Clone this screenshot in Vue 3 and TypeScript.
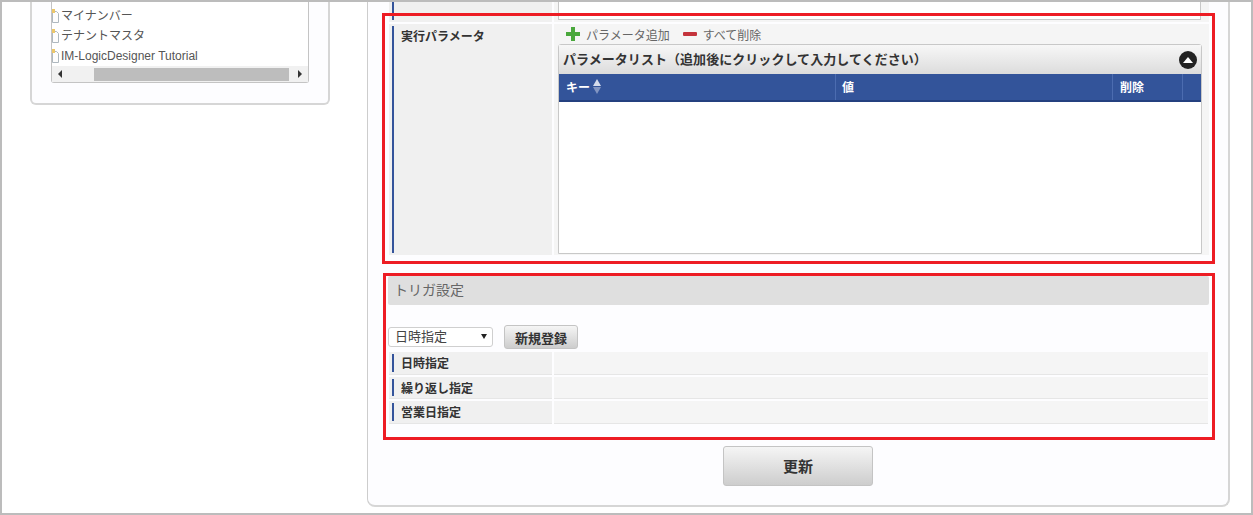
<script setup lang="ts">
const treeItems: string[] = ['マイナンバー', 'テナントマスタ', 'IM-LogicDesigner Tutorial']
const triggerRows: string[] = ['日時指定', '繰り返し指定', '営業日指定']
</script>

<template>
  <div class="frame">
    <aside class="side">
      <div class="side-panel">
        <div class="tree">
          <div class="tree-list">
            <div v-for="item in treeItems" :key="item" class="tree-item">
              <svg class="file" width="7" height="14" viewBox="0 0 7 14">
                <path d="M0.5 2.5H4.5L6.5 4.5V13.5H0.5Z" fill="#fdfdfd" stroke="#aeb8bf" />
                <rect x="0" y="0" width="3" height="4" fill="#ecc76a" />
              </svg>
              <span>{{ item }}</span>
            </div>
          </div>
          <div class="scrollbar">
            <span class="arrow-left"></span>
            <div class="track"><div class="thumb"></div></div>
            <span class="arrow-right"></span>
          </div>
        </div>
      </div>
    </aside>

    <main class="content">
      <div class="row row-stub">
        <div class="label"></div>
        <div class="value"><div class="stub-box"></div></div>
      </div>

      <div class="row row-param">
        <div class="label"><span>実行パラメータ</span></div>
        <div class="value">
          <div class="actions">
            <span class="action">
              <svg width="14" height="14" viewBox="0 0 14 14">
                <path d="M5 0h4v5h5v4H9v5H5V9H0V5h5z" fill="#4aa83c" />
              </svg>
              パラメータ追加
            </span>
            <span class="action">
              <svg width="14" height="14" viewBox="0 0 14 14">
                <rect x="0" y="5" width="14" height="4" rx="1" fill="#c4343c" />
              </svg>
              すべて削除
            </span>
          </div>
          <div class="grid">
            <div class="grid-title">
              <span>パラメータリスト（追加後にクリックして入力してください）</span>
              <span class="collapse"><i></i></span>
            </div>
            <div class="grid-head">
              <div class="col col-key">キー<span class="sort"><i></i><b></b></span></div>
              <div class="col col-val">値</div>
              <div class="col col-del">削除</div>
              <div class="col col-end"></div>
            </div>
            <div class="grid-body"></div>
          </div>
        </div>
      </div>

      <section class="trigger">
        <h2 class="trigger-title">トリガ設定</h2>
        <div class="trigger-tools">
          <div class="select">日時指定<i></i></div>
          <button class="btn" type="button">新規登録</button>
        </div>
        <div v-for="t in triggerRows" :key="t" class="row trigger-row">
          <div class="label"><span>{{ t }}</span></div>
          <div class="value"></div>
        </div>
      </section>

      <div class="submit"><button class="btn btn-large" type="button">更新</button></div>

      <div class="mark mark-one"></div>
      <div class="mark mark-two"></div>
    </main>
  </div>
</template>

<style scoped>
.frame {
  box-sizing: border-box;
  width: 1253px;
  height: 515px;
  border: 2px solid #bcbcbc;
  background: #fff;
  display: flex;
  align-items: flex-start;
  overflow: hidden;
  font-family: "Liberation Sans", "Noto Sans CJK JP", sans-serif;
  color: #333;
}
.side {
  margin-left: 28px;
  width: 300px;
  flex: none;
}
.side-panel {
  box-sizing: border-box;
  height: 103px;
  border: 2px solid #d6d6d6;
  border-top: none;
  border-radius: 0 0 6px 6px;
  background: #fdfdff;
  padding: 0 19px;
}
.tree {
  box-sizing: border-box;
  height: 81px;
  border: 1px solid #c4c4c4;
  border-top: none;
  border-radius: 0 0 3px 3px;
  background: #fff;
  display: flex;
  flex-direction: column;
}
.tree-list {
  flex: 1;
  padding-top: 4px;
}
.tree-item {
  height: 20px;
  display: flex;
  align-items: center;
  gap: 2px;
  font-size: 12px;
  color: #555;
  white-space: nowrap;
}
.tree-item span { display: block; line-height: 20px; height: 20px; }
.file { flex: none; }
.scrollbar {
  height: 16px;
  background: #f1f1f1;
  display: flex;
  align-items: center;
}
.track { flex: 1; height: 13px; }
.thumb { margin-left: 26px; margin-right: 3px; height: 13px; background: #bdbdbd; }
.arrow-left, .arrow-right {
  width: 0;
  height: 0;
  border-top: 4px solid transparent;
  border-bottom: 4px solid transparent;
  margin: 0 6px;
}
.arrow-left { border-right: 4px solid #333; }
.arrow-right { border-left: 4px solid #333; }

.content {
  position: relative;
  box-sizing: border-box;
  margin-left: 37px;
  width: 863px;
  height: 505px;
  border: 2px solid #d6d6d6;
  border-left: 1px solid #cdcdcd;
  border-top: none;
  border-radius: 0 0 8px 8px;
  background: #fdfdff;
  padding: 0 19px 0 20px;
}
.row {
  display: grid;
  grid-template-columns: 164px 1fr;
  gap: 2px;
}
.label {
  position: relative;
  box-sizing: border-box;
  background: #f0f0f0;
  margin-left: 1px;
  font-size: 12px;
  font-weight: 700;
  color: #333;
}
.label::before {
  content: "";
  position: absolute;
  left: 3px;
  top: 2px;
  bottom: 2px;
  width: 2px;
  background: #34549b;
}
.value { background: #f5f5f5; }
.row-stub { height: 20px; margin-bottom: 2px; }
.row-stub .label::before { top: 0; }
.stub-box {
  margin-left: 4px;
  width: 643px;
  height: 18px;
  background: #fff;
  border: 1px solid #c8c8c8;
  border-top: none;
  box-sizing: border-box;
}
.row-param { height: 231px; }
.row-param .label { padding: 3px 0 0 12px; }
.actions {
  height: 20px;
  display: flex;
  align-items: center;
  gap: 13px;
  padding-left: 12px;
}
.action {
  display: flex;
  align-items: center;
  gap: 6px;
  font-size: 12px;
  color: #666;
}
.grid {
  box-sizing: border-box;
  margin-left: 4px;
  width: 644px;
  height: 210px;
  border: 1px solid #c8c8c8;
  border-radius: 3px 3px 0 0;
  background: #fff;
}
.grid-title {
  box-sizing: border-box;
  height: 29px;
  background: linear-gradient(#f7f7f7, #dcdcdc);
  display: flex;
  align-items: center;
  justify-content: space-between;
  padding: 0 4px 2px 4px;
  font-size: 13px;
  font-weight: 700;
  color: #333;
  letter-spacing: 0.05px;
}
.collapse {
  width: 18px;
  height: 18px;
  margin-top: 2px;
  border-radius: 50%;
  background: #222;
  display: flex;
  align-items: center;
  justify-content: center;
}
.collapse i {
  width: 0;
  height: 0;
  border-left: 5px solid transparent;
  border-right: 5px solid transparent;
  border-bottom: 6px solid #fff;
}
.grid-head {
  height: 28px;
  box-sizing: border-box;
  display: flex;
  background: #33549a;
  border-bottom: 2px solid #24407f;
  color: #fff;
  font-size: 12px;
  font-weight: 700;
}
.col {
  box-sizing: border-box;
  display: flex;
  align-items: center;
  padding: 0 0 1px 7px;
  border-right: 1px solid #4c6cb0;
}
.col-key { width: 277px; }
.col-val { width: 277px; padding-left: 6px; }
.col-del { width: 70px; }
.col-end { flex: 1; border-right: none; }
.sort { display: inline-flex; flex-direction: column; gap: 1px; margin-left: 3px; }
.sort i, .sort b {
  width: 0;
  height: 0;
  border-left: 4px solid transparent;
  border-right: 4px solid transparent;
}
.sort i { border-bottom: 7px solid #d5dcec; }
.sort b { border-top: 7px solid #8295c2; }

.trigger {
  margin-top: 21px;
}
.trigger-title {
  margin: 0;
  box-sizing: border-box;
  height: 29px;
  width: 821px;
  border-radius: 2px;
  background: #dfdfdf;
  padding-left: 6px;
  font-size: 14px;
  line-height: 29px;
  font-weight: 400;
  color: #666;
}
.trigger-tools {
  margin-top: 19px;
  margin-bottom: 2px;
  height: 26px;
  display: flex;
  align-items: center;
  gap: 11px;
}
.select {
  box-sizing: border-box;
  position: relative;
  width: 105px;
  height: 20px;
  border: 1px solid #cfcfcf;
  border-radius: 3px;
  background: #fff;
  font-size: 13px;
  line-height: 18px;
  padding-left: 6px;
  color: #444;
}
.select i {
  position: absolute;
  right: 5px;
  top: 6px;
  width: 0;
  height: 0;
  border-left: 3px solid transparent;
  border-right: 3px solid transparent;
  border-top: 5px solid #222;
}
.btn {
  box-sizing: border-box;
  border: 1px solid #c4c4c4;
  border-radius: 3px;
  background: linear-gradient(#f5f5f5, #cdcdcd);
  font-family: inherit;
  font-weight: 700;
  color: #333;
  font-size: 13px;
  width: 74px;
  height: 24px;
  padding: 0;
}
.trigger-row {
  height: 22.5px;
  margin-bottom: 2px;
  width: 820px;
}
.trigger-row .value { border-bottom: 1px solid #e6e6e6; }
.trigger-row .label {
  display: flex;
  align-items: center;
  padding-left: 12px;
  border-bottom: 1px solid #e6e6e6;
}
.submit {
  margin-top: 22px;
  display: flex;
  justify-content: center;
  padding-right: 1px;
}
.btn-large {
  width: 150px;
  height: 40px;
  font-size: 15px;
}
.mark {
  position: absolute;
  box-sizing: border-box;
  border: 3px solid #ed1c24;
  pointer-events: none;
}
.mark-one { left: 14px; top: 11px; width: 833px; height: 251px; }
.mark-two { left: 15px; top: 271px; width: 832px; height: 167px; }
</style>

<style>
html, body { margin: 0; padding: 0; }
</style>
